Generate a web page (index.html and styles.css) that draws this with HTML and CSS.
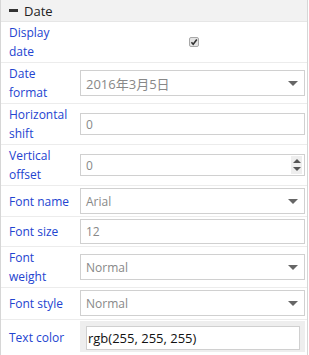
FILE: index.html
```html
<!DOCTYPE html>
<html lang="en">
<head>
    <meta charset="UTF-8">
    <title>Date properties</title>
    <link rel="stylesheet" href="styles.css">
</head>
<body>
    <div class="panel">
        <div class="panel-header">
            <span class="minus"></span>
            <span class="panel-title">Date</span>
        </div>

        <div class="row row-tall">
            <div class="label">Display date</div>
            <div class="value value-center">
                <svg class="check" width="10" height="10" viewBox="0 0 10 10">
                    <rect x="0.5" y="0.5" width="9" height="9" rx="1.5" fill="#e4e4e4" stroke="#a8a8a8"/>
                    <path d="M2.4 5.2 L4.2 7.2 L7.8 2.6" fill="none" stroke="#333" stroke-width="1.6"/>
                </svg>
            </div>
        </div>

        <div class="row row-tall">
            <div class="label">Date format</div>
            <div class="value">
                <div class="select"><span class="cjk">2016年3月5日</span><span class="caret"></span></div>
            </div>
        </div>

        <div class="row row-tall">
            <div class="label">Horizontal shift</div>
            <div class="value">
                <div class="input">0</div>
            </div>
        </div>

        <div class="row row-tall">
            <div class="label">Vertical offset</div>
            <div class="value">
                <div class="input input-number">
                    <span>0</span>
                    <span class="spinner">
                        <span class="spin-up"></span>
                        <span class="spin-down"></span>
                    </span>
                </div>
            </div>
        </div>

        <div class="row">
            <div class="label">Font name</div>
            <div class="value">
                <div class="select"><span>Arial</span><span class="caret"></span></div>
            </div>
        </div>

        <div class="row">
            <div class="label">Font size</div>
            <div class="value">
                <div class="input input-big">12</div>
            </div>
        </div>

        <div class="row row-tall">
            <div class="label">Font weight</div>
            <div class="value">
                <div class="select"><span>Normal</span><span class="caret"></span></div>
            </div>
        </div>

        <div class="row row-style">
            <div class="label">Font style</div>
            <div class="value">
                <div class="select"><span>Normal</span><span class="caret"></span></div>
            </div>
        </div>

        <div class="row row-last">
            <div class="label">Text color</div>
            <div class="value">
                <div class="color-box">
                    <div class="color-input">rgb(255, 255, 255)</div>
                </div>
            </div>
        </div>
    </div>
</body>
</html>
```
FILE: styles.css
```css
body {
    margin: 0;
    padding: 0;
    background-color: #fff;
    font-family: "Open Sans", Arial, sans-serif;
    font-size: 12px;
}
.panel {
    width: 306px;
    height: 355px;
    border-left: 1px solid #d6d6d6;
    border-right: 1px solid #d6d6d6;
    overflow: hidden;
}
.panel-header {
    display: flex;
    align-items: center;
    height: 21px;
    background-color: #f2f2f2;
    border-bottom: 1px solid #e6e6e6;
    padding-left: 8px;
}
.minus {
    width: 9px;
    height: 3px;
    background-color: #333;
    margin-right: 6px;
}
.panel-title {
    font-size: 13px;
    color: #222;
}
.row {
    display: flex;
    border-bottom: 1px solid #ececec;
}
.row-tall {
    min-height: 40px;
}
.label {
    width: 64px;
    padding-left: 8px;
    display: flex;
    align-items: center;
    line-height: 19px;
    color: #2344d0;
}
.value {
    flex: 1;
    display: flex;
    align-items: center;
    padding: 2px 2px 2px 7px;
}
.value-center {
    justify-content: center;
}
.check {
    display: block;
    margin-left: 3px;
}
.select, .input {
    box-sizing: border-box;
    width: 100%;
    border: 1px solid #d0d0d0;
    background-color: #fff;
    color: #888;
    display: flex;
    align-items: center;
    justify-content: space-between;
    padding: 0 6px 0 5px;
}
.select {
    height: 26px;
}
.input {
    height: 22px;
}
.input-big {
    height: 25px;
}
.cjk {
    font-family: "Open Sans", "Noto Sans CJK SC", sans-serif;
    font-size: 13px;
}
.caret {
    width: 0;
    height: 0;
    border-left: 5px solid transparent;
    border-right: 5px solid transparent;
    border-top: 5px solid #666;
}
.input-number {
    padding-right: 2px;
}
.spinner {
    width: 11px;
    height: 18px;
    background-color: #eee;
    display: flex;
    flex-direction: column;
    align-items: center;
    justify-content: center;
    gap: 4px;
}
.spin-up {
    width: 0;
    height: 0;
    border-left: 4px solid transparent;
    border-right: 4px solid transparent;
    border-bottom: 4px solid #555;
}
.spin-down {
    width: 0;
    height: 0;
    border-left: 4px solid transparent;
    border-right: 4px solid transparent;
    border-top: 4px solid #555;
}
.row-style .value {
    padding-bottom: 3px;
}
.row-last {
    border-bottom: none;
}
.row-last .value {
    padding-top: 1px;
    align-items: flex-start;
}
.color-box {
    width: 100%;
    box-sizing: border-box;
    background-color: #eee;
    padding: 5px 5px 2px 6px;
    height: 31px;
}
.color-input {
    box-sizing: border-box;
    height: 24px;
    border: 1px solid #d0d0d0;
    background-color: #fff;
    color: #111;
    font-size: 13px;
    line-height: 22px;
    padding-left: 1px;
}
```
